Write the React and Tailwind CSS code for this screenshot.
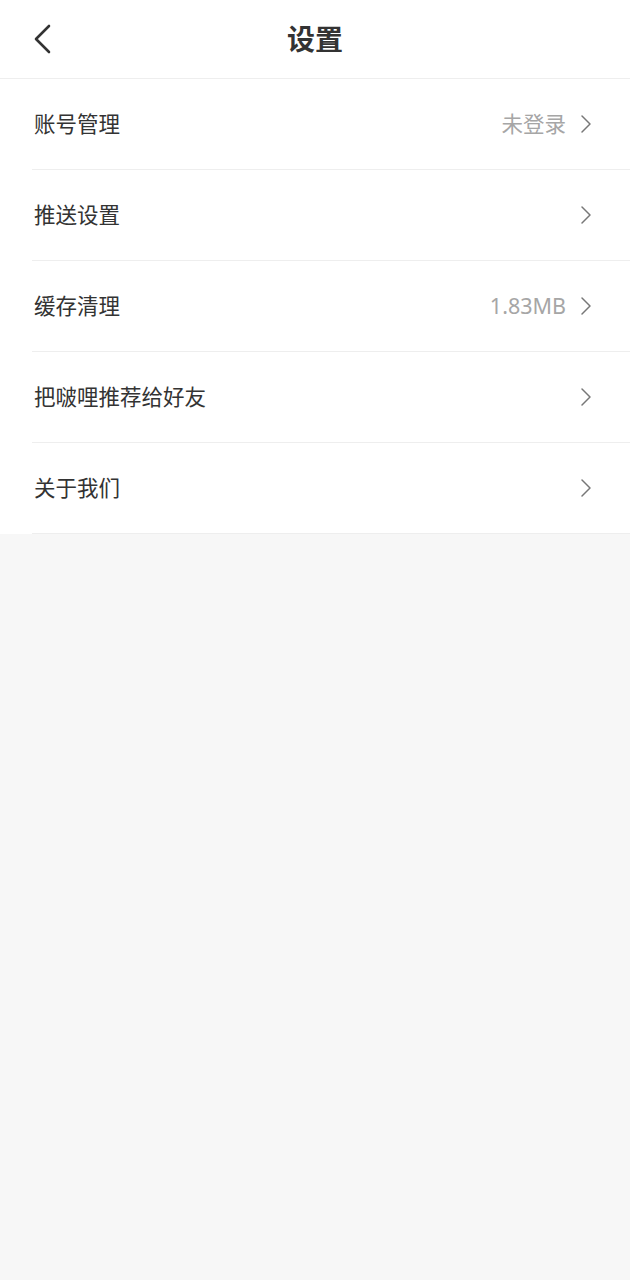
import React from 'react';

const items = [
  { label: '账号管理', value: '未登录' },
  { label: '推送设置' },
  { label: '缓存清理', value: '1.83MB' },
  { label: '把啵哩推荐给好友' },
  { label: '关于我们' },
];

const Chevron = ({ className }) => (
  <svg viewBox="0 0 12 20" className={className} fill="none" stroke="currentColor" strokeWidth="1.5" strokeLinecap="round" strokeLinejoin="round">
    <path d="M2 2l8 8-8 8" />
  </svg>
);

const App = () => {
  return (
    <div
      className="min-h-[1280px] bg-[#f7f7f7]"
      style={{ fontFamily: '"Noto Sans", "Noto Sans CJK SC", sans-serif' }}
    >
      {/* Header */}
      <div className="relative h-[79px] bg-white border-b border-[#eeeeee] flex items-center justify-center">
        <button className="absolute left-[32px] top-[24px] text-[#333333]">
          <svg viewBox="0 0 20 30" className="w-[20px] h-[30px]" fill="none" stroke="currentColor" strokeWidth="2.6" strokeLinecap="round" strokeLinejoin="round">
            <path d="M17 2L4 15l13 13" />
          </svg>
        </button>
        <h1 className="text-[28px] font-bold text-[#333333] leading-none">设置</h1>
      </div>

      {/* List */}
      <div className="bg-white">
        {items.map((item, index) => (
          <div key={index} className="pl-[32px]">
            <div className="h-[91px] flex items-center justify-between border-b border-[#eeeeee] pr-[38px]">
              <span className="pl-[2px] text-[21.5px] text-[#333333]">{item.label}</span>
              <div className="flex items-center gap-[14px]">
                {item.value && (
                  <span className="text-[21.5px] text-[#a6a6a6]">{item.value}</span>
                )}
                <Chevron className="w-[12px] h-[20px] text-[#777777]" />
              </div>
            </div>
          </div>
        ))}
      </div>
    </div>
  );
};

export default App;
